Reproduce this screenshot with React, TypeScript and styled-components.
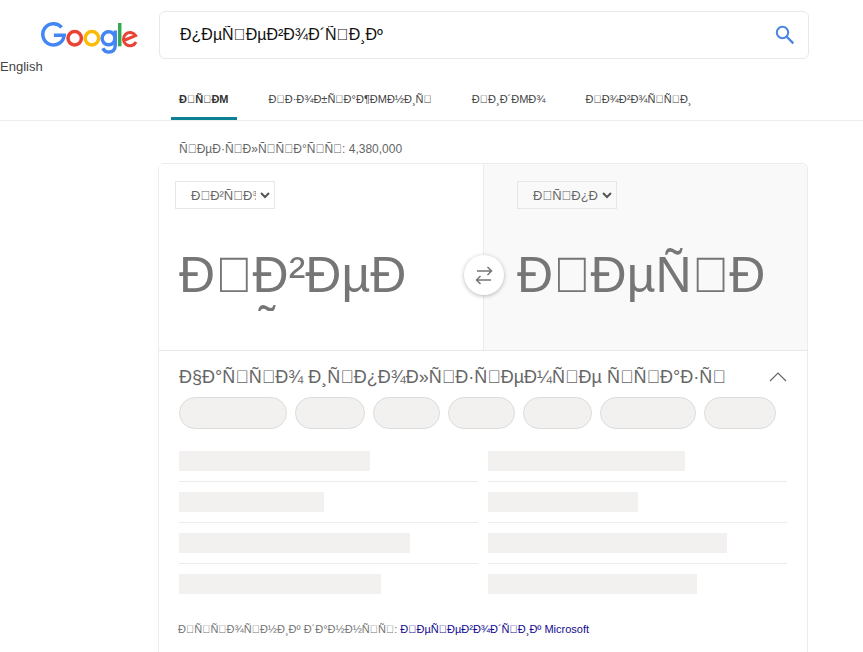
import React from "react";
import styled, { createGlobalStyle } from "styled-components";

const GlobalStyle = createGlobalStyle`
  * { box-sizing: border-box; }
  body {
    margin: 0;
    background: #fff;
    color: #444;
    font-family: "Liberation Sans", Arial, sans-serif;
    font-size: 12px;
  }
  button, input, select, textarea { font-family: inherit; }
`;

const Page = styled.div`
  min-height: 100vh;
  display: flex;
  flex-direction: column;
`;

const Header = styled.header`
  display: flex;
  height: 80px;
`;

const Brand = styled.div`
  flex: 0 0 159px;
  padding-top: 21px;
`;

const LogoLink = styled.a`
  display: block;
  width: 98px;
  height: 33px;
  margin-left: 41px;
`;

const Language = styled.a`
  display: block;
  margin-top: 5px;
  font-size: 13px;
  line-height: 16px;
  color: #444;
  text-decoration: none;
`;

const SearchForm = styled.form`
  flex: 0 1 650px;
  height: 48px;
  margin-top: 11px;
  padding: 0 12px 0 20px;
  display: flex;
  align-items: center;
  border: 1px solid #e8e8e8;
  border-radius: 6px;
`;

const SearchInput = styled.input`
  flex: 1;
  min-width: 0;
  height: 44px;
  padding: 0 0 1px;
  border: 0;
  outline: 0;
  background: transparent;
  color: #111;
  font-size: 16px;
`;

const SearchButton = styled.button`
  display: flex;
  padding: 0;
  border: 0;
  background: none;
`;

const Tabs = styled.nav`
  display: flex;
  gap: 24px;
  height: 41px;
  padding-left: 171px;
  border-bottom: 1px solid #ececec;
`;

const Tab = styled.a<{ $active?: boolean }>`
  padding: 0 8px;
  font-size: 11px;
  line-height: 38px;
  font-weight: ${(p) => (p.$active ? 700 : 400)};
  color: ${(p) => (p.$active ? "#333" : "#444")};
  border-bottom: 3px solid ${(p) => (p.$active ? "#0c8193" : "transparent")};
  text-transform: uppercase;
  text-decoration: none;
  white-space: nowrap;
`;

const Main = styled.main`
  flex: 1;
  display: flex;
  flex-direction: column;
  width: 100%;
  max-width: 808px;
  padding-left: 158px;
`;

const ResultCount = styled.p`
  margin: 20px 0 6px 21px;
  line-height: 16px;
  color: #666;
`;

const Card = styled.section`
  flex: 1;
  display: flex;
  flex-direction: column;
  border: 1px solid #ececec;
  border-bottom: 0;
  border-radius: 6px 6px 0 0;
`;

const Panes = styled.div`
  position: relative;
  display: grid;
  grid-template-columns: 1fr 1fr;
  border-bottom: 1px solid #e8e8e8;
`;

const Pane = styled.div<{ $shaded?: boolean }>`
  display: flex;
  flex-direction: column;
  height: 186px;
  padding: ${(p) => (p.$shaded ? "17px 8px 0 33px" : "17px 40px 0 16px")};
  background: ${(p) => (p.$shaded ? "#f9f9f9" : "#fff")};
  border-left: ${(p) => (p.$shaded ? "1px solid #ececec" : "0")};
  border-top-right-radius: ${(p) => (p.$shaded ? "6px" : "0")};
`;

const SelectWrap = styled.div`
  position: relative;
  width: 100px;
  height: 28px;
`;

const SelectBox = styled.select`
  appearance: none;
  width: 100%;
  height: 100%;
  padding: 0 18px 0 15px;
  border: 1px solid #e6e6e6;
  border-radius: 0;
  background: transparent;
  color: #666;
  font-size: 13px;
`;

const SelectArrow = styled.svg`
  position: absolute;
  right: 5px;
  top: 10px;
  pointer-events: none;
`;

const PhraseText = styled.textarea<{ $inset?: boolean }>`
  display: block;
  width: 100%;
  height: 64px;
  margin-top: 38px;
  padding: 0 0 0 ${(p) => (p.$inset ? "4px" : "0")};
  border: 0;
  outline: 0;
  resize: none;
  overflow: hidden;
  background: transparent;
  color: #767676;
  font-size: 50px;
  line-height: 57px;
  &::placeholder { color: #767676; }
`;

const SwapButton = styled.button`
  position: absolute;
  left: calc(50% - 19px);
  top: 91px;
  width: 40px;
  height: 40px;
  padding: 0;
  display: flex;
  align-items: center;
  justify-content: center;
  border: 0;
  border-radius: 50%;
  background: #fff;
  box-shadow: 0 1px 4px rgba(0, 0, 0, 0.28);
`;

const Phrases = styled.div`
  padding: 14px 20px 0;
`;

const PhrasesHeader = styled.div`
  display: flex;
  align-items: center;
  justify-content: space-between;
  height: 24px;
`;

const PhrasesTitle = styled.h2`
  margin: 0;
  font-size: 18px;
  line-height: 24px;
  font-weight: 400;
  color: #666;
  white-space: nowrap;
`;

const CollapseButton = styled.button`
  display: flex;
  padding: 0;
  border: 0;
  background: none;
`;

const Pills = styled.div`
  display: flex;
  gap: 8px;
  margin-top: 8px;
`;

const Pill = styled.div<{ $width: number }>`
  flex: 0 1 ${(p) => p.$width}px;
  height: 32px;
  border: 1px solid #dcdcdc;
  border-radius: 16px;
  background: #f2f1f0;
`;

const Columns = styled.div`
  display: grid;
  grid-template-columns: 1fr 1fr;
  column-gap: 10px;
  margin-top: 12px;
`;

const SkeletonRow = styled.div`
  height: 41px;
  padding-top: 10px;
  border-bottom: 1px solid #ececec;
  &:nth-last-child(-n + 2) { border-bottom: 0; }
`;

const Skeleton = styled.div<{ $width: number }>`
  width: ${(p) => p.$width}px;
  max-width: 100%;
  height: 20px;
  background: #f2f1f0;
`;

const Source = styled.p`
  margin: 16px 19px 0;
  font-size: 11px;
  line-height: 16px;
  color: #767676;
`;

const SourceLink = styled.a`
  color: #120a8f;
  text-decoration: none;
`;

// A code point without a glyph: the font draws its empty box for it.
const B = "\uE000";

const text = {
  query: `Ð¿ÐµÑ${B}ÐµÐ²Ð¾Ð´Ñ${B}Ð¸Ðº`,
  tabs: [
    `Ð${B}Ñ${B}Ðµ`,
    `Ð${B}Ð·Ð¾Ð±Ñ${B}Ð°Ð¶ÐµÐ½Ð¸Ñ${B}`,
    `Ð${B}Ð¸Ð´ÐµÐ¾`,
    `Ð${B}Ð¾Ð²Ð¾Ñ${B}Ñ${B}Ð¸`,
  ],
  results: `Ñ${B}ÐµÐ·Ñ${B}Ð»Ñ${B}Ñ${B}Ð°Ñ${B}Ñ${B}: 4,380,000`,
  from: `Ð${B}Ð²Ñ${B}Ð¾`,
  to: `Ð${B}Ñ${B}Ð¿Ð°Ð½`,
  enter: `Ð${B}Ð²ÐµÐ´Ð¸Ñ`,
  translation: `Ð${B}ÐµÑ${B}Ð`,
  phrases: `Ð§Ð°Ñ${B}Ñ${B}Ð¾ Ð¸Ñ${B}Ð¿Ð¾Ð»Ñ${B}Ð·Ñ${B}ÐµÐ¼Ñ${B}Ðµ Ñ${B}Ñ${B}Ð°Ð·Ñ${B}`,
  source: `Ð${B}Ñ${B}Ñ${B}Ð¾Ñ${B}Ð½Ð¸Ðº Ð´Ð°Ð½Ð½Ñ${B}Ñ${B}: `,
  sourceLink: `Ð${B}ÐµÑ${B}ÐµÐ²Ð¾Ð´Ñ${B}Ð¸Ðº Microsoft`,
};

const pills = [108, 70, 67, 67, 69, 96, 72];
const rows = [191, 197, 145, 150, 231, 239, 202, 209];

function Logo() {
  return (
    <svg width="98" height="33" viewBox="41 21 98 33" fill="none" strokeWidth="3.5" aria-hidden="true">
      <path d="M61.6 27.3A10.7 10.7 0 1 0 64.2 35.2H53.9" stroke="#4285f4" />
      <circle cx="74.7" cy="38.3" r="6.7" stroke="#ea4335" />
      <circle cx="91.9" cy="38.3" r="6.7" stroke="#fbbc05" />
      <circle cx="108.6" cy="38.3" r="6.5" stroke="#4285f4" />
      <path d="M115.2 30.5V45.6C115.2 50 112.5 52.1 109 52.1C106.2 52.1 104 50.6 102.9 48.2" stroke="#4285f4" />
      <path d="M119.7 23V46.3" stroke="#34a853" />
      <path d="M136 42A6.6 6.6 0 1 1 135.6 35.6L125 40" stroke="#ea4335" strokeWidth="3" />
    </svg>
  );
}

function LanguageSelect({ label, value }: { label: string; value: string }) {
  return (
    <SelectWrap>
      <SelectBox aria-label={label}>
        <option>{value}</option>
      </SelectBox>
      <SelectArrow width="10" height="8" viewBox="0 0 10 8" fill="none" stroke="#555" strokeWidth="2">
        <path d="M1 2L5 6L9 2" />
      </SelectArrow>
    </SelectWrap>
  );
}

export default function App() {
  return (
    <Page>
      <GlobalStyle />
      <Header>
        <Brand>
          <LogoLink href="#" aria-label="Google"><Logo /></LogoLink>
          <Language href="#">English</Language>
        </Brand>
        <SearchForm>
          <SearchInput aria-label="Search" defaultValue={text.query} />
          <SearchButton type="button" aria-label="Search">
            <svg width="22" height="22" viewBox="0 0 22 22" fill="none" stroke="#4a86e0" strokeWidth="2">
              <circle cx="8.5" cy="8.5" r="5.7" />
              <path d="M12.5 12.5L19.3 19.3" strokeWidth="2.4" />
            </svg>
          </SearchButton>
        </SearchForm>
      </Header>
      <Tabs>
        {text.tabs.map((label, i) => (
          <Tab key={i} href="#" $active={i === 0}>{label}</Tab>
        ))}
      </Tabs>
      <Main>
        <ResultCount>{text.results}</ResultCount>
        <Card>
          <Panes>
            <Pane>
              <LanguageSelect label="Source language" value={text.from} />
              <PhraseText $inset aria-label="Source text" placeholder={text.enter} />
            </Pane>
            <Pane $shaded>
              <LanguageSelect label="Target language" value={text.to} />
              <PhraseText readOnly aria-label="Translation" placeholder={text.translation} />
            </Pane>
            <SwapButton type="button" aria-label="Swap languages">
              <svg width="18" height="20" viewBox="0 0 18 20" fill="none" stroke="#767676" strokeWidth="1.5">
                <path d="M2 6H16M12.5 2L16.5 6L12.5 10M16 15H2M5.5 11L1.5 15L5.5 19" />
              </svg>
            </SwapButton>
          </Panes>
          <Phrases>
            <PhrasesHeader>
              <PhrasesTitle>{text.phrases}</PhrasesTitle>
              <CollapseButton type="button" aria-label="Collapse">
                <svg width="18" height="10" viewBox="0 0 18 10" fill="none" stroke="#666" strokeWidth="1.2">
                  <path d="M1 9L9 1L17 9" />
                </svg>
              </CollapseButton>
            </PhrasesHeader>
            <Pills>
              {pills.map((w, i) => <Pill key={i} $width={w} />)}
            </Pills>
            <Columns>
              {rows.map((w, i) => (
                <SkeletonRow key={i}><Skeleton $width={w} /></SkeletonRow>
              ))}
            </Columns>
          </Phrases>
          <Source>
            {text.source}
            <SourceLink href="#">{text.sourceLink}</SourceLink>
          </Source>
        </Card>
      </Main>
    </Page>
  );
}
